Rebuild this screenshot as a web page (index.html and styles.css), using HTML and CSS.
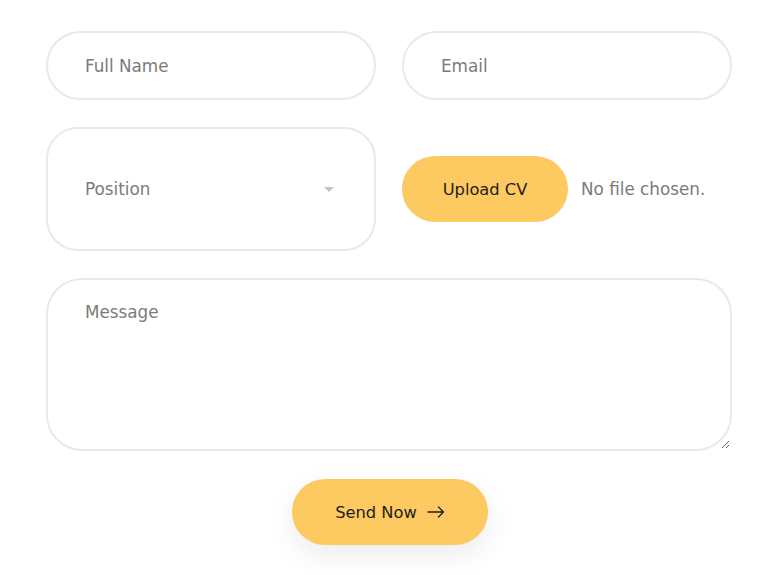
FILE: index.html
```html
<!DOCTYPE html>
<html lang="en">
<head>
<meta charset="utf-8">
<title>Application form</title>
<link rel="stylesheet" href="styles.css">
</head>
<body>
<form class="form">
  <div class="row">
    <input class="field pill" type="text" placeholder="Full Name">
    <input class="field pill" type="email" placeholder="Email">
  </div>
  <div class="row">
    <div class="select-wrap">
      <select class="field select">
        <option>Position</option>
      </select>
      <span class="caret"></span>
    </div>
    <div class="upload">
      <label class="btn upload-btn">Upload CV<input type="file" class="file-input"></label>
      <span class="file-name">No file chosen.</span>
    </div>
  </div>
  <textarea class="field message" placeholder="Message"></textarea>
  <div class="actions">
    <button type="button" class="btn send">Send Now
      <svg class="arrow" width="18" height="12" viewBox="0 0 18 12" fill="none" stroke="#1e1e1e" stroke-width="1.3" stroke-linecap="round" stroke-linejoin="round"><path d="M1 6h15.5M11.5 1l5 5-5 5"/></svg>
    </button>
  </div>
</form>
</body>
</html>
```
FILE: styles.css
```css
* { box-sizing: border-box; }
html, body { margin: 0; background: #fff; }
body {
  font-family: "DejaVu Sans", "Open Sans", sans-serif;
  color: #1e1e1e;
}
.form {
  padding: 31px 48px 30px 46px;
  display: flex;
  flex-direction: column;
  gap: 27px;
}
.row {
  display: grid;
  grid-template-columns: 1fr 1fr;
  column-gap: 26px;
}
.field {
  font-family: inherit;
  font-size: 16.8px;
  color: #7b7b7b;
  border: 2px solid #e9e9e9;
  background: #fff;
  outline: none;
}
.field::placeholder { color: #7b7b7b; opacity: 1; }
.pill {
  height: 69px;
  border-radius: 35px;
  padding: 0 37px;
}
.select-wrap { position: relative; }
.select {
  width: 100%;
  height: 124px;
  border-radius: 32px;
  padding: 0 37px;
  appearance: none;
  -webkit-appearance: none;
}
.caret {
  position: absolute;
  right: 42px;
  top: 60px;
  width: 0; height: 0;
  border-left: 5px solid transparent;
  border-right: 5px solid transparent;
  border-top: 5px solid #c4c4c4;
}
.upload {
  display: flex;
  align-items: center;
  gap: 13px;
}
.btn {
  font-family: inherit;
  background: #fdc961;
  color: #1e1e1e;
  border: none;
  font-size: 16.3px;
  display: inline-flex;
  align-items: center;
  justify-content: center;
  cursor: pointer;
}
.upload-btn {
  width: 166px;
  height: 66px;
  border-radius: 33px;
}
.file-input { display: none; }
.file-name {
  font-size: 16.8px;
  color: #7b7b7b;
}
.message {
  height: 173px;
  border-radius: 36px;
  padding: 22px 37px;
  resize: vertical;
  display: block;
  width: 100%;
}
.actions {
  display: flex;
  justify-content: center;
  padding-top: 1px;
  padding-left: 2px;
}
.send {
  width: 196px;
  height: 66px;
  border-radius: 33px;
  gap: 10px;
  box-shadow: 0 10px 30px rgba(0, 0, 0, 0.08);
}
.arrow { display: block; }
```
